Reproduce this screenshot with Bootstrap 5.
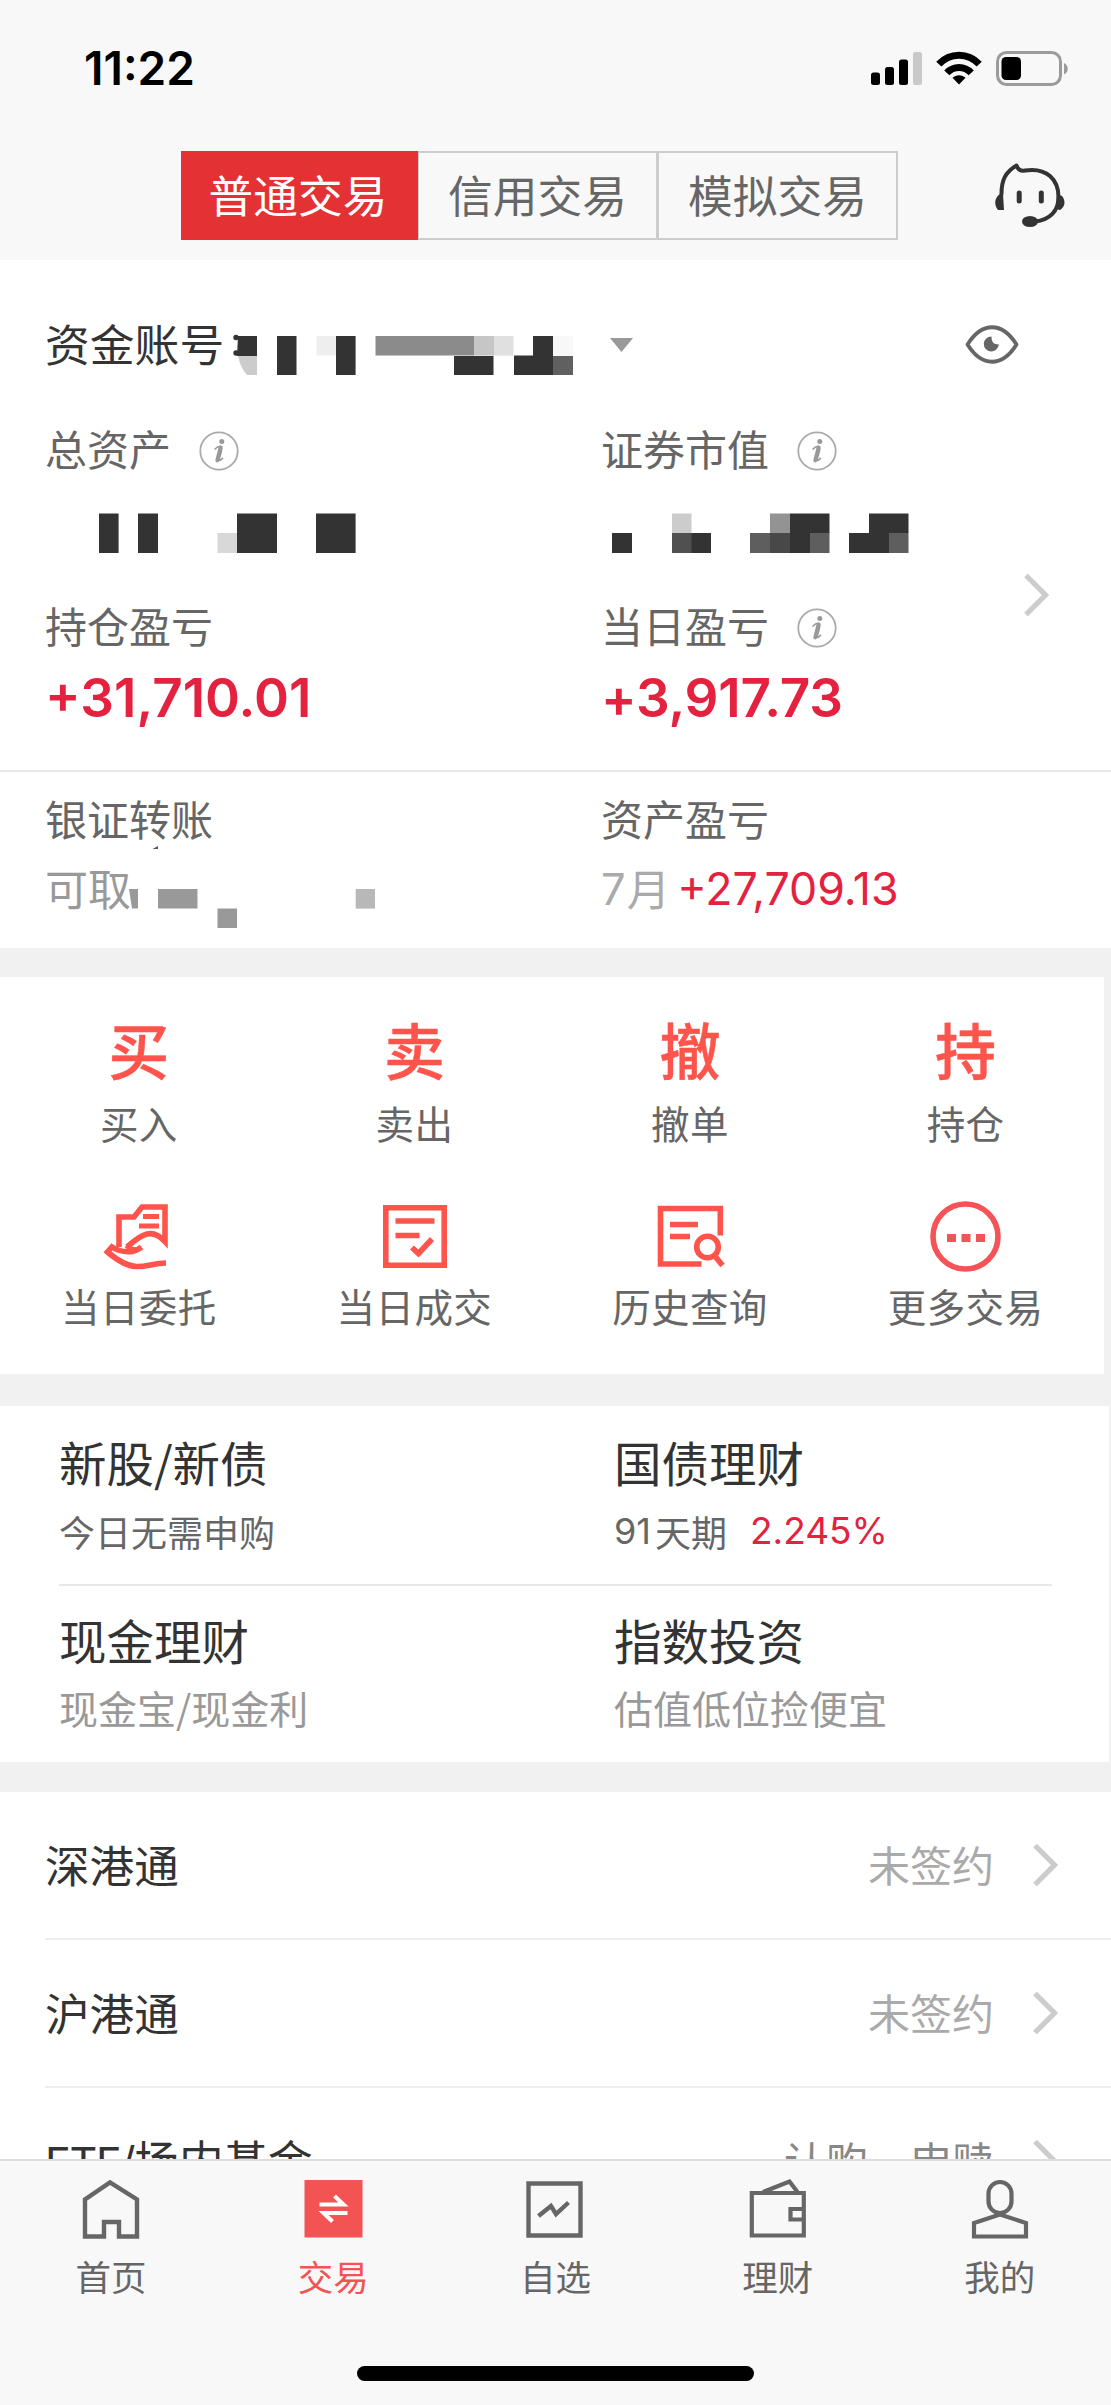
<!DOCTYPE html>
<html lang="zh-CN">
<head>
<meta charset="utf-8">
<meta name="viewport" content="width=device-width, initial-scale=1">
<title>交易</title>
<link href="https://cdn.jsdelivr.net/npm/bootstrap@5.3.0/dist/css/bootstrap.min.css" rel="stylesheet">
<style>
body{font-family:"Noto Sans CJK SC",sans-serif;color:#333;background:#f1f1f1;font-size:42px;line-height:48px}
.screen{width:1111px;height:2405px;overflow:hidden}
svg{display:block;flex:none}
.latin{font-family:Inter,"Noto Sans CJK SC",sans-serif}
.topbar{height:260px;background:#f8f8f8}
.statusbar{height:136px;padding:0 42px 0 84px}
.clock{font:600 46px/50px Inter,sans-serif;color:#000}
.segment{margin:15px 0 0 181px;width:717px;height:89px}
.segment .btn{border:2px solid #ccc;border-radius:0;color:#666;font-size:44.7px;line-height:48px;padding:0 0 4px;flex:1 1 240px}
.segment .btn.active{background:#e43133;border-color:#e43133;color:#fff;flex:0 0 237px;padding-right:3px}
.service{margin:24px 44px 0 auto}
.account{height:510px;padding:58px 0 0 45px}
.acct-row{height:50px;font-size:44.8px;line-height:50px}
.acct-row .name{width:178px}
.label-row{height:48px;color:#666}
.info{margin-left:28px}
.blocks{margin:41px 0 48px}
.profit{font:600 53px/60px Inter,sans-serif;color:#e4213e;margin-top:19px}
.col-left{width:556px}
.transfer{height:178px;border-top:2px solid #e8e8e8;padding:22px 0 0 45px}
.sub-row{margin-top:23px;height:48px;color:#999;font-size:43.5px}
.sub-row .avail{width:79px;font-size:43px;margin-top:-2px}
.red{color:#e4213e}
.actions{width:1104px;height:397px;margin-top:29px;padding:34px 0 0 1px}
.action{width:275.6px;color:#666;font-size:38.5px;line-height:44px;letter-spacing:.4px}
.action .big{height:76px;font-size:61px;line-height:76px;font-weight:500;color:#fe544c;letter-spacing:0;margin-bottom:13px;-webkit-text-stroke:.5px #fe544c}
.action .pic{height:76px;margin-bottom:9px}
.actions .row2{margin-top:54px}
.products{width:1109px;height:356px;margin-top:32px;padding:0 57px 0 59px}
.products h2{font-size:47.5px;line-height:54px;font-weight:400;margin:0;color:#333}
.prod-row{height:178px;padding-top:29px}
.prod-row + .prod-row{border-top:2px solid #e8e8e8;padding-top:27px}
.prod-sub{font-size:36px;line-height:44px;color:#666;margin-top:20px}
.prod-sub.pale{font-size:39px;color:#999;margin-top:18px}
.links{margin-top:30px;height:367px;overflow:hidden;padding-left:45px}
.link-row{height:148px;border-bottom:2px solid #eee;padding-right:52px;font-size:44.6px}
.link-row span{margin-top:-2px}
.link-row .state{font-size:42px;color:#aaa;margin-right:39px}
.link-row .etf{font-size:43px;letter-spacing:-1.3px}
.tabs{height:246px;background:#f8f8f8;border-top:2px solid #ddd;padding-top:16px}
.tab{width:20%;font-size:35.5px;line-height:42px;color:#666}
.tab span{margin-top:14px}
.tab.on{color:#f45354}
.homebar{width:397px;height:15px;border-radius:8px;background:#000;margin:69px auto 0}
</style>
</head>
<body>
<svg width="0" height="0" class="position-absolute">
  <symbol id="info" viewBox="0 0 40 40"><circle cx="20" cy="20" r="18.700" fill="none" stroke="#aaa" stroke-width="1.800"/><circle cx="22.800" cy="10.500" r="2.500" fill="#999"/><path d="M15.500 18.500C18 16 21 15 22.500 15.500C24.500 16.500 20 27 20 29.500C21 30 22 28.500 24 27" fill="none" stroke="#999" stroke-width="1.600"/><path d="M21.500 16.500L18.200 29.500" stroke="#999" stroke-width="3.800" stroke-linecap="round"/></symbol>
  <symbol id="chev" viewBox="0 0 26 42"><path d="M2 1.500L21.500 21L2 40.500" fill="none" stroke="#ccc" stroke-width="5.200"/></symbol>
</svg>
<div class="screen d-flex flex-column">
  <header class="topbar">
    <div class="statusbar d-flex align-items-center">
      <div class="clock">11:22</div>
      <svg class="ms-auto" width="51" height="33" viewBox="0 0 51 33"><rect y="20.500" width="9" height="12.500" rx="2.500"/><rect x="14" y="15" width="9" height="18" rx="2.500"/><rect x="28" y="7.500" width="9" height="25.500" rx="2.500"/><rect x="42" y="0" width="9" height="33" rx="2.500" fill="#c9c9c9"/></svg>
      <svg style="margin-left:14px" width="46" height="34" viewBox="0 0 46 34"><g fill="none" stroke="#000" stroke-width="7"><path d="M2.800 13.200C14 1.300 32 1.300 43.200 13.200"/><path d="M10.800 21.800C17.500 14.600 28.500 14.600 35.200 21.800"/></g><path d="M23 33.500L16.500 26.800C20 23.300 26 23.300 29.500 26.800Z"/></svg>
      <svg style="margin-left:14px" width="73" height="35" viewBox="0 0 73 35"><rect x="1.500" y="1.500" width="63" height="32" rx="9" fill="none" stroke="#9b9b9b" stroke-width="3"/><rect x="5.500" y="6" width="19.500" height="23" rx="4.500"/><path d="M68 12C73 14.500 73 21 68 23.500Z" fill="#9b9b9b"/></svg>
    </div>
    <div class="d-flex align-items-start">
      <div class="segment btn-group" role="group">
        <button type="button" class="btn active">普通交易</button>
        <button type="button" class="btn">信用交易</button>
        <button type="button" class="btn">模拟交易</button>
      </div>
      <svg class="service" width="76" height="70" viewBox="0 0 76 70"><g fill="none" stroke="#333" stroke-width="4" stroke-linecap="round" stroke-linejoin="round"><path d="M10.500 34C10.500 20 14.500 12 25.500 5.500C27 9.500 30 11.500 34 10.500C56 7 67.500 20 67.500 37C67.500 51 59 60 44 61.500"/><path d="M28.200 33v8M50.300 33v8" stroke-width="5"/></g><path d="M9 34C3 38 3 45 7 50L13 50L12 34ZM66 34L71 36C75 41 74 47 69 50L65 49Z" fill="#333"/><ellipse cx="39" cy="61.500" rx="8" ry="5.500" fill="#333"/></svg>
    </div>
  </header>

  <section class="account bg-white d-flex flex-column">
    <div class="acct-row d-flex align-items-start">
      <span class="name text-nowrap">资金账号</span>
      <svg width="350" height="57" viewBox="223 318 350 57"><g fill="#333"><circle cx="236" cy="337.500" r="2.700"/><circle cx="236" cy="353" r="2.700"/><path d="M238 336h19v20h-20zM277 336h19.500v39H277zM336 336h19.600v39H336zM454 356h39.500v19H454zM533 336h20v39h-39v-19.500h19z"/></g><path d="M238 356h19v19h-10Q240 367 238 356z" fill="#ccc"/><path d="M316.500 336H336v19.500h-19.500z" fill="#eee"/><path d="M375.500 336H474v19.600h-98.500z" fill="#8b8b8b"/><path d="M474 336h20v19.600h-20z" fill="#c6c6c6"/><path d="M494 336h19.500v19.600H494z" fill="#e0e0e0"/><path d="M553 336h20v20h-20z" fill="#f8f8f8"/><path d="M553 356h20v19h-20z" fill="#606060"/></svg>
      <svg style="margin:20px 0 0 37px" width="23" height="14"><path d="M0 0h23L11.500 14z" fill="#999"/></svg>
      <svg style="margin:7px 0 0 332px" width="54" height="40" viewBox="965 325 54 40"><path d="M967.500 344.500C982 321.500 1002 321.500 1016.500 344.500C1002 367.500 982 367.500 967.500 344.500Z" fill="none" stroke="#666" stroke-width="3.800" stroke-linejoin="round"/><path d="M991.500 336.500A7.500 7.500 0 1 0 998.800 344.500Q991 344.500 991.500 336.500Z" fill="#666"/></svg>
    </div>
    <div class="d-flex" style="margin-top:56px">
      <div class="col-left">
        <div class="label-row d-flex"><span>总资产</span><svg class="info mt-1" width="40" height="46"><use href="#info" y="3" width="40" height="40"/></svg></div>
        <svg class="blocks" width="400" height="40" viewBox="45 513 400 40"><path d="M99 513.500h19.600v39.500H99zM138 513.500h20v39.500h-20zM237 513.500h40v39.500h-40zM316 513.500h39.600v39.500H316z" fill="#333"/><path d="M217.500 533H237v20h-19.500z" fill="#d8d8d8"/></svg>
        <div class="label-row">持仓盈亏</div>
        <div class="profit">+31,710.01</div>
      </div>
      <div>
        <div class="label-row d-flex"><span>证券市值</span><svg class="info mt-1" width="40" height="46"><use href="#info" y="3" width="40" height="40"/></svg></div>
        <svg class="blocks" width="320" height="40" viewBox="601 513 320 40"><path d="M612 533h20v20h-20zM691 533h20v20h-20zM790 513.500h39.500V533H810v20h-20zM869 513.500h39.500V533H889v20h-40v-20h20z" fill="#333"/><path d="M672 513.500h19.500V533H672z" fill="#ccc"/><path d="M672 533h19.500v20H672z" fill="#505050"/><path d="M750 533h20v20h-20zM810 533h19.500v20H810zM889 533h19.500v20H889z" fill="#5e5e5e"/><path d="M770 513.500h20V533h-20z" fill="#939393"/><path d="M770 533h20v20h-20z" fill="#484848"/></svg>
        <div class="label-row d-flex"><span>当日盈亏</span><svg class="info mt-1" width="40" height="46"><use href="#info" y="3" width="40" height="40"/></svg></div>
        <div class="profit" style="letter-spacing:-.2px">+3,917.73</div>
      </div>
      <svg class="align-self-center ms-auto" style="margin:37px 61px 0 0" width="26" height="42"><use href="#chev"/></svg>
    </div>
  </section>

  <section class="transfer bg-white d-flex">
    <div class="col-left">
      <div class="label-row">银证转账</div>
      <div class="sub-row d-flex"><span class="avail text-nowrap">可取</span><svg style="margin-top:-20px" width="260" height="86" viewBox="124 845 260 86"><path d="M152.500 849L158 846v3z" fill="#555"/><path d="M129 889h9v19.600h-6z" fill="#999"/><path d="M158 889h39.500v19.600H158zM217.500 908.600H237V928h-19.500z" fill="#999"/><path d="M355.700 889H375v19.600h-19.300z" fill="#b8b8b8"/></svg></div>
    </div>
    <div>
      <div class="label-row">资产盈亏</div>
      <div class="sub-row d-flex" style="color:#aaa"><span class="latin">7</span><span style="margin-left:1px;margin-right:7px;margin-top:-1px">月</span><span class="red latin" style="font-size:44.7px">+27,709.13</span></div>
    </div>
  </section>

  <section class="actions bg-white">
    <div class="d-flex text-center">
      <div class="action"><div class="big">买</div><div>买入</div></div>
      <div class="action"><div class="big">卖</div><div>卖出</div></div>
      <div class="action"><div class="big">撤</div><div>撤单</div></div>
      <div class="action"><div class="big">持</div><div>持仓</div></div>
    </div>
    <div class="row2 d-flex text-center">
      <div class="action"><div class="pic"><svg class="mx-auto" width="76" height="76" viewBox="100 1198 76 76"><g transform="translate(100 1200)" fill="none" stroke="#fe544c" stroke-width="5.600"><path d="M18 47V17H33L41 7H64V41.500C58 35 52 32.500 46 34C38 36 33 41 26 47"/><path d="M40.500 47C34 52.500 22 54 11 47L6.500 52C16 60 26 66 35 66.500C46 67 52 63 65 63"/><path d="M42 16.500H58M38 26H58" stroke-width="5"/><path d="M26 45.500Q29 50 35 50"/></g></svg></div><div>当日委托</div></div>
      <div class="action"><div class="pic"><svg class="mx-auto" width="76" height="76" viewBox="376 1198 76 76"><g fill="none" stroke="#fe544c" stroke-width="5.600"><path d="M385.800 1207.800h58.400v57.400h-58.400z"/><path d="M395.500 1221h39M395.500 1235.500h24"/><path d="M412 1247.500l6.500 6L432 1239"/></g></svg></div><div>当日成交</div></div>
      <div class="action"><div class="pic"><svg class="mx-auto" width="76" height="76" viewBox="652 1198 76 76"><g fill="none" stroke="#fe544c" stroke-width="5.600"><path d="M720.300 1235.500v-27H660.500v55.500H701.500"/><path d="M670 1224.500h28M670 1236.500h20"/><circle cx="707.500" cy="1247" r="10.800"/><path d="M714.500 1255.500l8 10"/></g></svg></div><div>历史查询</div></div>
      <div class="action"><div class="pic"><svg class="mx-auto" width="76" height="76" viewBox="928 1198 76 76"><circle cx="965.500" cy="1236.500" r="32.500" fill="none" stroke="#f45458" stroke-width="5.600"/><path d="M947 1234h9v8h-9zM961.500 1234h9v8h-9zM976 1234h9v8h-9z" fill="#f45458"/></svg></div><div>更多交易</div></div>
    </div>
  </section>

  <section class="products bg-white">
    <div class="prod-row d-flex">
      <div style="width:555px"><h2>新股/新债</h2><div class="prod-sub">今日无需申购</div></div>
      <div><h2>国债理财</h2><div class="prod-sub d-flex"><span class="latin">91</span><span class="ms-1">天期</span><span class="red latin" style="margin-left:23px;font-size:37px">2.245%</span></div></div>
    </div>
    <div class="prod-row d-flex">
      <div style="width:555px"><h2>现金理财</h2><div class="prod-sub pale">现金宝/现金利</div></div>
      <div><h2>指数投资</h2><div class="prod-sub pale">估值低位捡便宜</div></div>
    </div>
  </section>

  <section class="links bg-white">
    <div class="link-row d-flex align-items-center"><span class="me-auto">深港通</span><span class="state">未签约</span><svg width="26" height="42"><use href="#chev"/></svg></div>
    <div class="link-row d-flex align-items-center"><span class="me-auto">沪港通</span><span class="state">未签约</span><svg width="26" height="42"><use href="#chev"/></svg></div>
    <div class="link-row d-flex align-items-center"><span class="me-auto"><span class="latin etf">ETF/</span>场内基金</span><span class="state" style="color:#888">认购、申赎</span><svg width="26" height="42"><use href="#chev"/></svg></div>
  </section>

  <nav class="tabs">
    <div class="d-flex">
      <div class="tab d-flex flex-column align-items-center"><svg width="64" height="64" viewBox="79 2177 64 64"><path d="M85 2236.500V2199.500L110 2182.500L137 2199.500V2236.500H119V2222H104V2236.500Z" fill="none" stroke="#666" stroke-width="4.400"/></svg><span>首页</span></div>
      <div class="tab on d-flex flex-column align-items-center"><svg width="64" height="64" viewBox="301.500 2177 64 64"><path d="M305 2180h58v57.500h-58z" fill="#f45354"/><path d="M320 2204.500h24l-9-8.500M348 2213h-24l9 8.500" fill="none" stroke="#fff" stroke-width="4"/></svg><span>交易</span></div>
      <div class="tab d-flex flex-column align-items-center"><svg width="64" height="64" viewBox="523 2177 64 64"><g fill="none" stroke="#666" stroke-width="4.400"><path d="M528.500 2183.500h52v52h-52z"/><path d="M538.500 2216L551 2206L556 2214L568.500 2202.500"/></g></svg><span>自选</span></div>
      <div class="tab d-flex flex-column align-items-center"><svg width="64" height="64" viewBox="746 2177 64 64"><g fill="none" stroke="#666" stroke-width="4.200"><path d="M751.800 2193h52v42.500h-52z"/><path d="M763 2192L789.500 2181.500L797.500 2192"/><path d="M803 2209h-12.500v10.500H803"/></g></svg><span>理财</span></div>
      <div class="tab d-flex flex-column align-items-center"><svg width="64" height="64" viewBox="968 2177 64 64"><g fill="none" stroke="#666" stroke-width="4.200"><rect x="988.500" y="2182" width="23" height="31" rx="11.500"/><path d="M974 2236.500V2223L1000 2214.500L1026 2223V2236.500Z"/></g></svg><span>我的</span></div>
    </div>
    <div class="homebar"></div>
  </nav>
</div>
<script src="https://cdn.jsdelivr.net/npm/bootstrap@5.3.0/dist/js/bootstrap.bundle.min.js"></script>
</body>
</html>
